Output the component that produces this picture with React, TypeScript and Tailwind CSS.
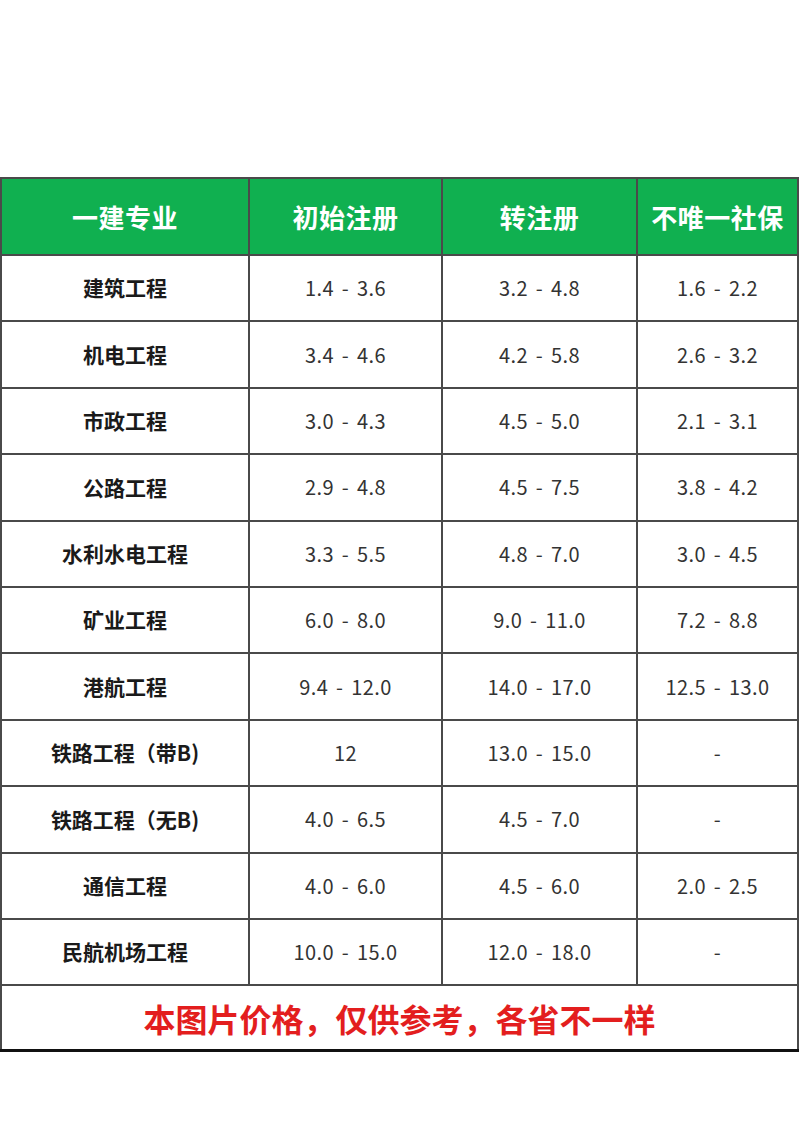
import React from "react";

const rows: [string, string, string, string][] = [
  ["建筑工程", "1.4 - 3.6", "3.2 - 4.8", "1.6 - 2.2"],
  ["机电工程", "3.4 - 4.6", "4.2 - 5.8", "2.6 - 3.2"],
  ["市政工程", "3.0 - 4.3", "4.5 - 5.0", "2.1 - 3.1"],
  ["公路工程", "2.9 - 4.8", "4.5 - 7.5", "3.8 - 4.2"],
  ["水利水电工程", "3.3 - 5.5", "4.8 - 7.0", "3.0 - 4.5"],
  ["矿业工程", "6.0 - 8.0", "9.0 - 11.0", "7.2 - 8.8"],
  ["港航工程", "9.4 - 12.0", "14.0 - 17.0", "12.5 - 13.0"],
  ["铁路工程（带B)", "12", "13.0 - 15.0", "-"],
  ["铁路工程（无B)", "4.0 - 6.5", "4.5 - 7.0", "-"],
  ["通信工程", "4.0 - 6.0", "4.5 - 6.0", "2.0 - 2.5"],
  ["民航机场工程", "10.0 - 15.0", "12.0 - 18.0", "-"],
];

const font = { fontFamily: '"Noto Sans CJK SC", "Noto Sans", sans-serif' };

export default function App() {
  return (
    <div className="w-[800px] h-[1132px] bg-white" style={font}>
      <div className="pt-[177px]">
        <div className="w-[799px] bg-[#4a4a4a] p-[2px] pb-0 grid grid-cols-[246px_191px_193px_159px] gap-[2px]">
          {["一建专业", "初始注册", "转注册", "不唯一社保"].map((h) => (
            <div
              key={h}
              className="h-[75px] bg-[#10b050] flex items-center justify-center text-white font-bold text-[26px] tracking-[0.5px]"
            >
              {h}
            </div>
          ))}
          {rows.map((r) =>
            r.map((c, i) => (
              <div
                key={r[0] + i}
                className={
                  "h-[64.4px] bg-white flex items-center justify-center " +
                  (i === 0
                    ? "font-bold text-[21px] text-[#1a1a1a]"
                    : "text-[20px] text-[#333] tracking-[0.4px] [word-spacing:3px]")
                }
              >
                {c}
              </div>
            ))
          )}
          <div className="col-span-4 h-[63px] bg-white flex items-center justify-center text-[#e31e1e] font-bold text-[32px]">
            本图片价格，仅供参考，各省不一样
          </div>
        </div>
        <div className="w-[799px] h-[3px] bg-[#111]"></div>
      </div>
    </div>
  );
}
